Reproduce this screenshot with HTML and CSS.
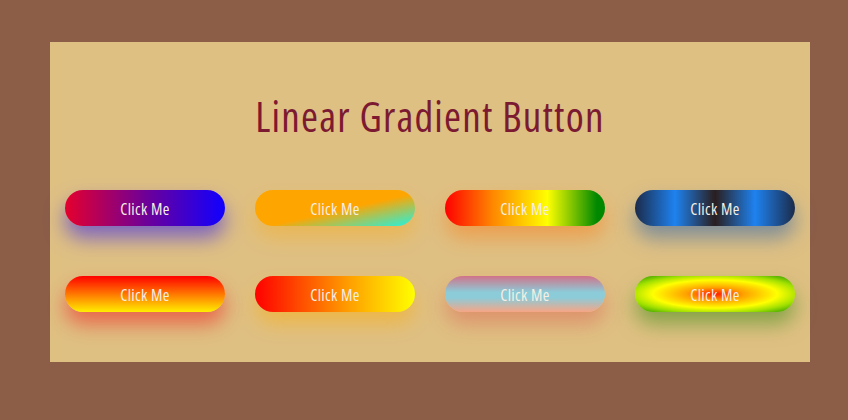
FILE: index.html
```html
<!DOCTYPE html>
<html>
<head>
<meta charset="utf-8">
<link rel="stylesheet" href="styles.css">
</head>
<body>
<div class="panel">
  <h1 class="title">Linear Gradient Button</h1>
  <div class="grid">
    <button class="btn b1">Click Me</button>
    <button class="btn b2">Click Me</button>
    <button class="btn b3">Click Me</button>
    <button class="btn b4">Click Me</button>
    <button class="btn b5">Click Me</button>
    <button class="btn b6">Click Me</button>
    <button class="btn b7">Click Me</button>
    <button class="btn b8">Click Me</button>
  </div>
</div>
</body>
</html>
```
FILE: styles.css
```css
html, body { margin: 0; padding: 0; }
body {
  background: #8c5e48;
  width: 848px;
  height: 420px;
  padding: 42px 0 0 50px;
  box-sizing: border-box;
  font-family: "Open Sans", "DejaVu Sans Condensed", sans-serif;
  font-stretch: 75%;
}
.panel {
  width: 760px;
  height: 320px;
  background: #dfc083;
  box-sizing: border-box;
  padding: 50px 15px 0;
}
.title {
  margin: 0;
  text-align: center;
  font-weight: normal;
  font-size: 41px;
  letter-spacing: 1.2px;
  line-height: 48px;
  color: #7b1a31;
}
.grid {
  margin-top: 50px;
  display: grid;
  grid-template-columns: repeat(4, 160px);
  column-gap: 30px;
  row-gap: 50px;
}
.btn {
  width: 160px;
  height: 36px;
  border: none;
  border-radius: 18px;
  color: #f6efe4;
  font-family: inherit;
  font-stretch: 75%;
  font-size: 16px;
  letter-spacing: 0.4px;
  padding: 2px 0 0;
  cursor: pointer;
}
.b1 { background: linear-gradient(to right, #e4002e, #6f0096 50%, #1000ff); box-shadow: 0 12px 20px rgba(60, 40, 230, 0.6); }
.b2 { background: linear-gradient(to bottom right, #ffa500 54%, #20f4e0); box-shadow: 0 12px 20px rgba(255, 165, 0, 0.35); }
.b3 { background: linear-gradient(to right, #ff0000, #ff8800 30%, #ffff00 64%, #008800 95%); box-shadow: 0 12px 20px rgba(255, 110, 0, 0.4); }
.b4 { background: linear-gradient(to right, #1b2b4a, #1e82f0 25%, #2a1e1e 50%, #1e82f0 75%, #1b2b4a); box-shadow: 0 12px 20px rgba(50, 100, 170, 0.55); }
.b5 { background: linear-gradient(to bottom, #ff0000, #ffee00); box-shadow: 0 12px 20px rgba(240, 30, 30, 0.55); }
.b6 { background: linear-gradient(to right, #ff0000, #ffa200 60%, #ffff00); box-shadow: 0 12px 20px rgba(255, 170, 0, 0.45); }
.b7 { background: linear-gradient(to bottom, #d0738a, #8ccbd8 45%, #8ccbd8 60%, #f6a585); box-shadow: 0 12px 20px rgba(220, 90, 80, 0.45); }
.b8 { background: radial-gradient(ellipse at center, #ff1a00 0%, #ffa000 25%, #ffff00 55%, #a0e000 75%, #209000 100%); box-shadow: 0 12px 20px rgba(60, 140, 20, 0.55); }
```
